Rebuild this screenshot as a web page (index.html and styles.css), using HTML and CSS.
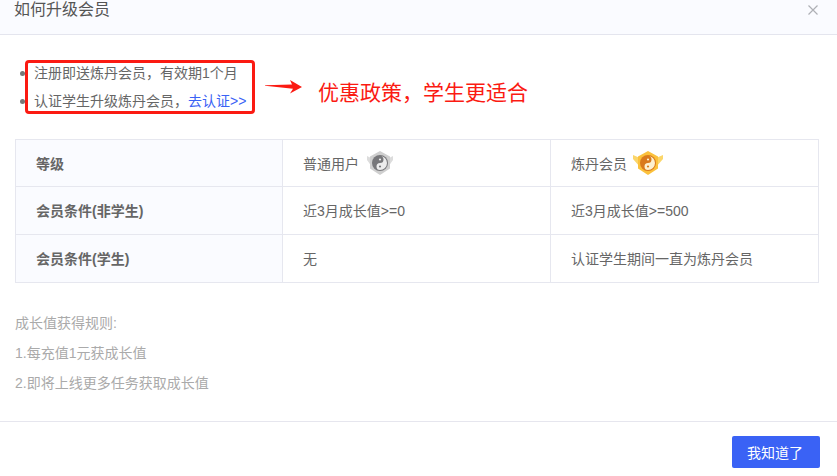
FILE: index.html
```html
<!DOCTYPE html>
<html>
  <head>
    <meta charset="UTF-8" />
    <title>如何升级会员</title>
    <link rel="stylesheet" href="styles.css">
  </head>
  <body>
    <div class="dialog">
      <div class="dialog-header">
        <span class="dialog-title">如何升级会员</span>
        <svg class="close-icon" width="12" height="12" viewBox="0 0 12 12">
          <path d="M1.5 1.5L10.5 10.5M10.5 1.5L1.5 10.5" stroke="#aeb0b5" stroke-width="1.2" fill="none" />
        </svg>
      </div>
      <div class="dialog-body">
        <ul class="intro">
          <li><span>注册即送炼丹会员，有效期1个月</span></li>
          <li><span>认证学生升级炼丹会员，<a href="#">去认证&gt;&gt;</a></span></li>
        </ul>

        <!-- red markup drawn on top of the dialog -->
        <div class="mark-box"></div>
        <svg class="mark-arrow" width="38" height="14" viewBox="0 0 38 14">
          <path d="M0 5.200L27 4.600L25 0L37 7L25 13.500L28 8.800L0 5.800Z" fill="#fb1a12" />
        </svg>
        <div class="mark-text">优惠政策，学生更适合</div>

        <table class="level-table">
          <tr>
            <th>等级</th>
            <td>
              <span class="level">普通用户
                <svg class="badge" width="30" height="26" viewBox="0 0 30 26">
                  <path d="M2 6L7 8.500V17L2 10Z M28 6L23 8.500V17L28 10Z" fill="#dcdcdc" />
                  <path d="M15 1L25 6.500V18.500L15 25L5 18.500V6.500Z" fill="#cfcfcf" />
                  <circle cx="15" cy="13" r="8" fill="#77777a" />
                  <path d="M15 6A7 7 0 0 1 15 20A3.500 3.500 0 0 1 15 13A3.500 3.500 0 0 0 15 6Z" fill="#ececec" />
                  <circle cx="15" cy="9.500" r="1.100" fill="#ececec" />
                  <circle cx="15" cy="16.500" r="1.100" fill="#77777a" />
                </svg>
              </span>
            </td>
            <td>
              <span class="level">炼丹会员
                <svg class="badge" width="30" height="26" viewBox="0 0 30 26">
                  <path d="M0 5L7 8V17L0 9Z M30 5L23 8V17L30 9Z" fill="#fbd66a" />
                  <path d="M15 1L25 6.500V18.500L15 25L5 18.500V6.500Z" fill="#fbc13c" />
                  <circle cx="15" cy="13" r="8" fill="#d9791c" />
                  <path d="M15 6A7 7 0 0 1 15 20A3.500 3.500 0 0 1 15 13A3.500 3.500 0 0 0 15 6Z" fill="#fdf0cf" />
                  <circle cx="15" cy="9.500" r="1.100" fill="#fdf0cf" />
                  <circle cx="15" cy="16.500" r="1.100" fill="#d9791c" />
                </svg>
              </span>
            </td>
          </tr>
          <tr class="tall">
            <th>会员条件(非学生)</th>
            <td>近3月成长值&gt;=0</td>
            <td>近3月成长值&gt;=500</td>
          </tr>
          <tr class="tall">
            <th>会员条件(学生)</th>
            <td>无</td>
            <td>认证学生期间一直为炼丹会员</td>
          </tr>
        </table>

        <div class="rules">
          <p>成长值获得规则:</p>
          <p>1.每充值1元获成长值</p>
          <p>2.即将上线更多任务获取成长值</p>
        </div>
      </div>
      <div class="dialog-footer">
        <button class="ok-button">我知道了</button>
      </div>
    </div>
  </body>
</html>
```

FILE: styles.css
```css
body, html {
    margin: 0;
    padding: 0;
    background-color: #fff;
    font-family: "Liberation Sans", "Noto Sans CJK SC", sans-serif;
    font-size: 14px;
    color: #666;
}

.dialog {
    position: relative;
    height: 476px;
    overflow: hidden;
}

.dialog-header {
    height: 34px;
    padding: 0 18px 0 14px;
    display: flex;
    justify-content: space-between;
    align-items: flex-start;
    background-color: #fafbff;
    border-bottom: 1px solid #e4e5ee;
}

.dialog-title {
    font-size: 16px;
    line-height: 19px;
    color: #555;
}

.close-icon {
    margin-top: 4px;
}

.dialog-body {
    padding: 24px 18px 0 15px;
}

.intro {
    margin: 0;
    padding: 0;
    color: #666;
    height: 80px;
    list-style: none;
}

.intro li {
    line-height: 28px;
    display: flex;
    align-items: center;
    gap: 8px;
    padding-left: 5px;
}

.intro li::before {
    content: "";
    width: 5px;
    height: 5px;
    border-radius: 50%;
    background-color: #777;
    flex: none;
    margin-right: 1px;
}

.intro a {
    color: #3a62f5;
    text-decoration: none;
}

.mark-box {
    position: absolute;
    left: 25px;
    top: 60px;
    width: 224px;
    height: 48px;
    border: 3px solid #fb1a12;
    border-radius: 4px;
}

.mark-arrow {
    position: absolute;
    left: 265px;
    top: 80px;
}

.mark-text {
    position: absolute;
    left: 318px;
    top: 79px;
    font-size: 21px;
    line-height: 28px;
    color: #fb1a12;
}

.level-table {
    width: 804px;
    table-layout: fixed;
    border-collapse: collapse;
}

.level-table th,
.level-table td {
    height: 47px;
    padding: 0 20px;
    border: 1px solid #e6e7ef;
    text-align: left;
    box-sizing: border-box;
}

.level-table .tall th,
.level-table .tall td {
    height: 48px;
    padding-bottom: 2px;
}

.level-table th {
    width: 267px;
    background-color: #fafbff;
    color: #666;
    font-weight: bold;
}

.level {
    display: flex;
    align-items: center;
    gap: 6px;
}

.rules {
    margin-top: 25px;
    color: #aaa;
}

.rules p {
    margin: 0;
    line-height: 30px;
}

.dialog-footer {
    position: absolute;
    left: 0;
    right: 0;
    top: 421px;
    height: 55px;
    box-sizing: border-box;
    padding: 14px 17px 0 0;
    display: flex;
    justify-content: flex-end;
    align-items: flex-start;
    border-top: 1px solid #e6e6ee;
}

.ok-button {
    width: 88px;
    height: 32px;
    padding: 0 2px 0 0;
    border: none;
    border-radius: 2px;
    background-color: #3a62f5;
    color: #fff;
    font-family: inherit;
    font-size: 14px;
}
```
